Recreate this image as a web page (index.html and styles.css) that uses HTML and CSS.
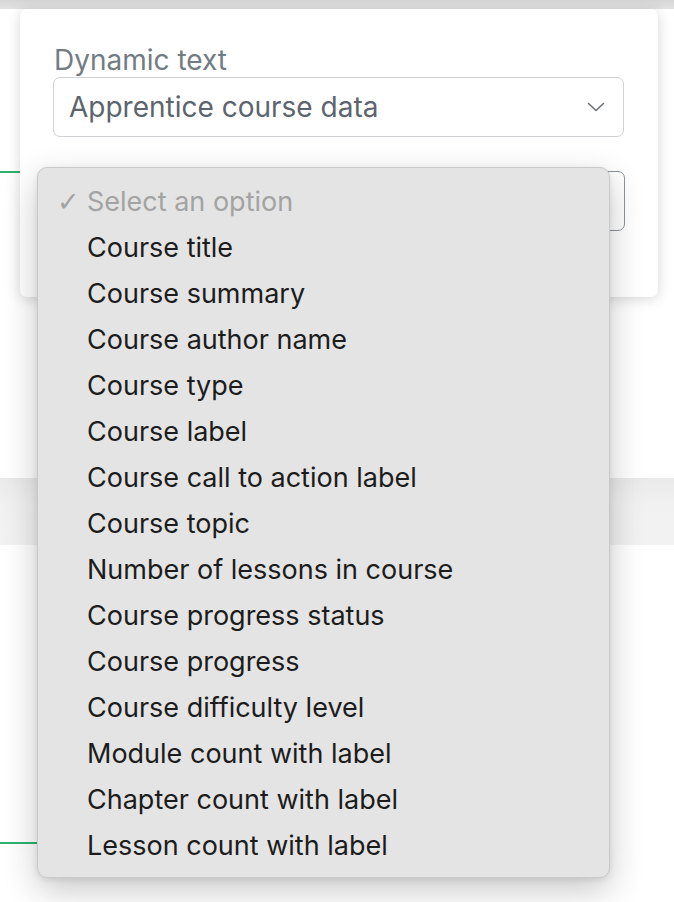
FILE: index.html
```html
<!DOCTYPE html>
<html>
<head>
<meta charset="utf-8">
<link rel="stylesheet" href="styles.css">
</head>
<body>
<div class="page">
  <div class="topbar"></div>
  <div class="tabline"></div>
  <div class="band"></div>
  <div class="tabline tabline-low"></div>
</div>

<div class="panel">
  <div class="field-label">Dynamic text</div>
  <div class="select">
    <span class="select-value">Apprentice course data</span>
    <svg class="chevron" width="18" height="10" viewBox="0 0 18 10"><path d="M1.5 1.5 L9 8.5 L16.5 1.5" fill="none" stroke="#6b6f75" stroke-width="1.6" stroke-linecap="round" stroke-linejoin="round"/></svg>
  </div>
  <div class="select select-second"></div>
</div>

<ul class="menu">
  <li class="item placeholder"><span class="check">✓</span>Select an option</li>
  <li class="item">Course title</li>
  <li class="item">Course summary</li>
  <li class="item">Course author name</li>
  <li class="item">Course type</li>
  <li class="item">Course label</li>
  <li class="item">Course call to action label</li>
  <li class="item">Course topic</li>
  <li class="item">Number of lessons in course</li>
  <li class="item">Course progress status</li>
  <li class="item">Course progress</li>
  <li class="item">Course difficulty level</li>
  <li class="item">Module count with label</li>
  <li class="item">Chapter count with label</li>
  <li class="item">Lesson count with label</li>
</ul>
</body>
</html>
```
FILE: styles.css
```css
html, body {
  margin: 0;
  padding: 0;
}
body {
  width: 674px;
  height: 902px;
  overflow: hidden;
  background: #ffffff;
  font-family: Inter, "Noto Sans", sans-serif;
  position: relative;
}
.page {
  display: flex;
  flex-direction: column;
  height: 902px;
}
.topbar {
  height: 9px;
  background: linear-gradient(#d6d6d6, #e2e2e2);
  flex: none;
}
.tabline {
  width: 40px;
  height: 2px;
  background: #2fb26f;
  margin-top: 162px;
  flex: none;
}
.band {
  height: 67px;
  margin-top: 305px;
  background: linear-gradient(#eaeaea, #f1f1f1 40%, #f2f2f2);
  flex: none;
}
.tabline-low {
  margin-top: 297px;
}

.panel {
  position: absolute;
  left: 20px;
  top: 9px;
  width: 638px;
  height: 288px;
  box-sizing: border-box;
  background: #fff;
  border-radius: 7px;
  box-shadow: 0 2px 14px rgba(0,0,0,0.16);
  padding: 41px 34px 0 33px;
}
.field-label {
  font-size: 28px;
  line-height: 20px;
  color: #737b83;
  margin-left: 1px;
  margin-bottom: 7px;
  height: 20px;
}
.select {
  height: 60px;
  box-sizing: border-box;
  border: 1.5px solid #cfd2d5;
  border-radius: 7px;
  display: flex;
  align-items: center;
  justify-content: space-between;
  padding: 0 18px 0 15px;
}
.select-value {
  font-size: 28px;
  color: #5c646d;
}
.select-second {
  margin-top: 34px;
  border-color: #8e949b;
  margin-right: -1px;
}

.menu {
  position: absolute;
  left: 37px;
  top: 167px;
  width: 573px;
  height: 711px;
  box-sizing: border-box;
  margin: 0;
  padding: 10px 0 0 0;
  list-style: none;
  background: #e4e4e4;
  border: 1px solid #c9c9c9;
  border-radius: 10px;
  box-shadow: 0 12px 34px rgba(0,0,0,0.22), 0 2px 6px rgba(0,0,0,0.08);
}
.item {
  height: 46px;
  display: flex;
  align-items: center;
  padding-left: 49px;
  font-size: 27px;
  color: #1c1c1c;
  position: relative;
}
.placeholder {
  color: #a3a3a3;
}
.check {
  position: absolute;
  left: 19px;
  font-size: 27px;
  font-weight: bold;
  font-family: "DejaVu Sans", sans-serif;
  color: #a3a3a3;
}
```
